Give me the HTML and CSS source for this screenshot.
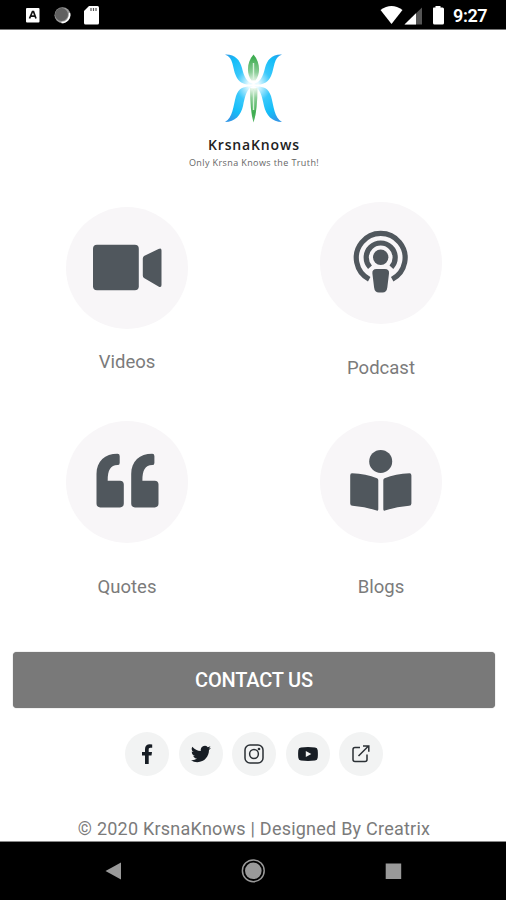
FILE: index.html
```html
<!DOCTYPE html>
<html lang="en">
<head>
<meta charset="utf-8">
<title>KrsnaKnows</title>
<link rel="stylesheet" href="styles.css">
</head>
<body>
<div class="screen">
  <header class="status">
    <svg class="status-icons" viewBox="0 0 80 29" width="80" height="29">
      <rect x="1" y="8" width="13.500" height="14.500" rx="1" fill="#fff"/>
      <path d="M4.500 18.500 7.500 11.500h1l2.500 7M5.800 16.200h4" fill="none" stroke="#111" stroke-width="1.700"/>
      <circle cx="37.500" cy="15.200" r="8" fill="#999"/>
      <path d="M44.500 13a8 8 0 0 1-8 9.500" fill="none" stroke="#fff" stroke-width="1.500"/>
      <circle cx="36.500" cy="14.500" r="6.500" fill="#606060"/>
      <path d="M64 6h8.500q1.500 0 1.500 1.500v15.500q0 1.500-1.500 1.500h-12q-1.500 0-1.500-1.500V11z" fill="#fff"/>
      <path d="M66 8v3m2.500-3v3M71 8v3" stroke="#555" stroke-width="1.200"/>
    </svg>
    <div class="status-right">
      <svg viewBox="380 0 65 29" width="65" height="29">
        <path d="M380.500 10q11-8 22 0L391.500 24z" fill="#fff"/>
        <path d="M422 7.500v17h-17.500z" fill="#555"/>
        <path d="M416 13.300v11.200h-11.500z" fill="#fff"/>
        <path d="M433.500 7.500h2V6h5v1.500h2q1.500 0 1.500 1.500v14q0 1.500-1.500 1.500h-8q-1.500 0-1.500-1.500V9q0-1.500.500-1.500z" fill="#fff"/>
      </svg>
      <span class="clock">9:27</span>
    </div>
  </header>
  <main>
    <div class="brand">
      <svg class="logo" viewBox="224 53 60 71" width="60" height="71">
        <defs>
          <radialGradient id="wing" gradientUnits="userSpaceOnUse" cx="253.500" cy="85" r="42">
            <stop offset=".12" stop-color="#e8faff"/><stop offset=".42" stop-color="#39c8fb"/><stop offset=".75" stop-color="#14bdf8"/><stop offset="1" stop-color="#3199e8"/>
          </radialGradient>
          <radialGradient id="leaf" gradientUnits="userSpaceOnUse" cx="253.500" cy="85" r="37">
            <stop offset=".05" stop-color="#fff"/><stop offset=".35" stop-color="#8dce98"/><stop offset=".75" stop-color="#3dac50"/><stop offset="1" stop-color="#59b969"/>
          </radialGradient>
        </defs>
        <g fill="url(#wing)">
          <path d="M225 54.500C235 54 240 60 242 68C244 77 247 82 253 84C246 86 239 83 236 76C232 67 234 58 225 54.500z"/>
          <path d="M282 54.500C272 54 267 60 265 68C263 77 260 82 254 84C261 86 268 83 271 76C275 67 273 58 282 54.500z"/>
          <path d="M225 122C235 122 241 115 243 106C245 96 247 88 253 86.500C245 86 239 87 236 96C233 107 233 117 225 122z"/>
          <path d="M282 122C272 122 266 115 264 106C262 96 260 88 254 86.500C262 86 268 87 271 96C274 107 274 117 282 122z"/>
        </g>
        <path d="M253.500 54.500C247 62 246 73 251.500 80.500h4C261 73 260 62 253.500 54.500zM250 88h7.500Q257.500 111 253.500 122.500Q250 111 250 88z" fill="url(#leaf)"/>
        <path d="M253.500 63v16m0 10v21" stroke="#d9f2dd" stroke-width="1.400"/>
      </svg>
      <h1>KrsnaKnows</h1>
      <p>Only Krsna Knows the Truth!</p>
    </div>
    <nav class="tiles">
      <a class="tile tile-videos">
        <svg viewBox="66 207 122 122"><circle cx="127" cy="268" r="61"/>
          <rect x="93" y="244.800" width="45.800" height="45.400" rx="4"/>
          <path d="M142.800 258.500q0-1.500 1.200-2.500l14.500-7q3-1.500 3 1.500v34.500q0 3-3 1.500l-14.500-8.500q-1.200-1-1.200-2.500z"/>
        </svg><span>Videos</span></a>
      <a class="tile tile-podcast">
        <svg viewBox="320 202 122 122"><circle cx="381" cy="263" r="61"/>
          <g class="ring"><path d="M369.200 279.300A24.400 24.400 0 1 1 392.200 279.300"/><path d="M370 267.300A14.500 14.500 0 1 1 391.400 267.300"/></g>
          <circle class="ink" cx="380.700" cy="257.300" r="7.700"/>
          <path d="M376.500 269h8.400q4.600 0 4.100 4.500l-1.700 14q-.600 5-4.800 5h-3.600q-4.200 0-4.800-5l-1.700-14q-.500-4.500 4.100-4.500z"/>
        </svg><span>Podcast</span></a>
      <a class="tile tile-quotes">
        <svg viewBox="66 421 122 122"><circle cx="127" cy="482" r="61"/>
          <path d="M96.500 474C96.500 461 105 453.700 117.500 453.700q2.200 0 2.200 2.200v7q0 2.200-2.200 2.200C110.500 465.500 107.700 470 107.700 480.800h12.300q3.800 0 3.800 3.800v19q0 3.800-3.800 3.800h-19.700q-3.800 0-3.800-3.800z"/>
          <path d="M131.200 474C131.200 461 139.700 453.700 152.200 453.700q2.200 0 2.200 2.200v7q0 2.200-2.200 2.200C145.200 465.500 142.400 470 142.400 480.800h12.300q3.800 0 3.800 3.800v19q0 3.800-3.800 3.800h-19.700q-3.800 0-3.800-3.800z"/>
        </svg><span>Quotes</span></a>
      <a class="tile tile-blogs">
        <svg viewBox="320 421 122 122"><circle cx="381" cy="482" r="61"/>
          <circle class="ink" cx="380.700" cy="461.400" r="11.500"/>
          <path d="M352 473.200Q366 473.500 377 478.200q1.300.600 1.300 2v29q0 2-1.600 1.300Q365 506.500 352.500 505.800q-2.300 0-2.300-2.300v-28q0-2.300 1.800-2.300zM409.600 473.200Q395.600 473.500 384.600 478.200q-1.300.600-1.300 2v29q0 2 1.600 1.300Q396.600 506.500 409.100 505.800q2.300 0 2.300-2.300v-28q0-2.300-1.800-2.300z"/>
        </svg><span>Blogs</span></a>
    </nav>
    <button class="contact">CONTACT US</button>
    <div class="social">
      <a><svg viewBox="0 0 20 20"><path d="M8 20v-8.500H5V8h3V5.300C8 2 9.800.300 12.800.300q1.600 0 2.400.300v3.200h-1.800C12 3.800 11.700 4.500 11.700 5.600V8h3.300l-.5 3.500h-2.800V20z"/></svg></a>
      <a><svg viewBox="0 0 24 24"><path d="M23.950 4.570a10 10 0 0 1-2.820.77 4.960 4.960 0 0 0 2.160-2.720c-.95.550-2 .960-3.130 1.180a4.920 4.920 0 0 0-8.380 4.480C7.690 8.100 4.070 6.130 1.640 3.160a4.930 4.930 0 0 0 1.520 6.570 4.900 4.900 0 0 1-2.230-.61v.06a4.920 4.920 0 0 0 3.950 4.830 5 5 0 0 1-2.210.08 4.940 4.940 0 0 0 4.600 3.420A9.870 9.870 0 0 1 0 19.540a13.990 13.990 0 0 0 7.550 2.210c9.050 0 14-7.500 14-13.980v-.64a9.940 9.940 0 0 0 2.400-2.560z"/></svg></a>
      <a><svg class="line" viewBox="0 0 20 20"><rect x="1" y="1" width="18" height="18" rx="5"/><circle cx="10" cy="10" r="4.400"/><circle cx="15" cy="5" r=".6"/></svg></a>
      <a><svg viewBox="0 0 20 20"><path fill-rule="evenodd" d="M3 3.500Q10 2.600 17 3.500q2.500.200 2.700 2.700.4 3.800 0 7.600-.2 2.500-2.700 2.700-7 .900-14 0Q.5 16.300.3 13.800q-.4-3.800 0-7.600Q.5 3.700 3 3.500zM7.800 7v6l5.500-3z"/></svg></a>
      <a><svg class="line" viewBox="0 0 20 20"><path d="M9 3.500H4q-2 0-2 2v10q0 2 2 2h10q2 0 2-2v-5M7.500 12 17.500 2M12 2h5.800v5.800"/></svg></a>
    </div>
    <footer>© 2020 KrsnaKnows | Designed By Creatrix</footer>
  </main>
  <div class="navbar">
    <svg viewBox="0 842 506 58" width="506" height="58" fill="#999">
      <path d="M105.500 871 121 862.500v17z"/>
      <circle cx="253.300" cy="870.800" r="8.300"/><circle cx="253.300" cy="870.800" r="10.900" fill="none" stroke="#999" stroke-width="1.500"/>
      <rect x="385.700" y="863.500" width="15.500" height="15.500"/>
    </svg>
  </div>
</div>
</body>
</html>
```
FILE: styles.css
```css
* { box-sizing: border-box; }
body { margin: 0; background: #fff; font-family: Roboto, "Liberation Sans", sans-serif; }
svg { display: block; }
.screen { width: 506px; height: 900px; display: flex; flex-direction: column; overflow: hidden; }
.status { height: 30px; flex: none; background: #000; border-bottom: 1px solid #777; display: flex; justify-content: space-between; padding: 0 18px 0 25px; }
.status-right { display: flex; gap: 8px; }
.clock { width: 35px; color: #fff; font-size: 18px; line-height: 32px; font-weight: 600; letter-spacing: -.4px; white-space: nowrap; }
main { flex: 1; display: flex; flex-direction: column; }
.brand { height: 150px; padding-top: 23px; display: flex; flex-direction: column; align-items: center; }
.logo { margin-left: 2px; }
.brand h1 { margin: 12px 0 0 2px; font: 600 14px/18px "Open Sans", sans-serif; letter-spacing: .85px; color: #222; }
.brand p { margin: 2px 0 0 2px; font: 9px/14px "Open Sans", sans-serif; letter-spacing: .4px; color: #666; white-space: nowrap; }
.tiles { display: grid; grid-template-columns: 254px 254px; grid-template-rows: 241px 210px; width: 508px; }
.tile { display: flex; flex-direction: column; align-items: center; color: #7b7b7b; font-size: 18.5px; line-height: 24px; }
.tile svg { width: 122px; height: 122px; fill: #50575d; }
.tile svg > circle:first-child { fill: #f8f6f8; }
.ring { fill: none; stroke: #50575d; stroke-width: 5.2; }
.tile-videos { padding-top: 27px; }
.tile-videos span { margin-top: 21px; }
.tile-podcast { padding-top: 22px; }
.tile-podcast span { margin-top: 32px; }
.tile-quotes span, .tile-blogs span { margin-top: 32px; }
.contact { width: 482px; height: 56px; margin: 21px 0 0 13px; padding: 0; border: 0; border-radius: 4px; background: #797979; color: #fff; font: 500 20px/56px Roboto, sans-serif; letter-spacing: -.2px; box-shadow: 0 0 1px #777; }
.social { display: flex; gap: 9.500px; margin: 24px 0 0 125px; }
.social a { width: 44px; height: 44px; border-radius: 50%; background: #f2f3f3; display: flex; align-items: center; justify-content: center; }
.social svg { width: 20px; height: 20px; fill: #171d24; }
.social svg.line { fill: none; stroke: #2b3035; stroke-width: 1.5; }
footer { margin-top: 41px; text-align: center; font-size: 18px; line-height: 24px; letter-spacing: .23px; color: #7b7b7b; padding-left: 2px; white-space: nowrap; }
.navbar { flex: none; height: 58px; background: #000; box-shadow: 0 -1px 0 #888; }
```
